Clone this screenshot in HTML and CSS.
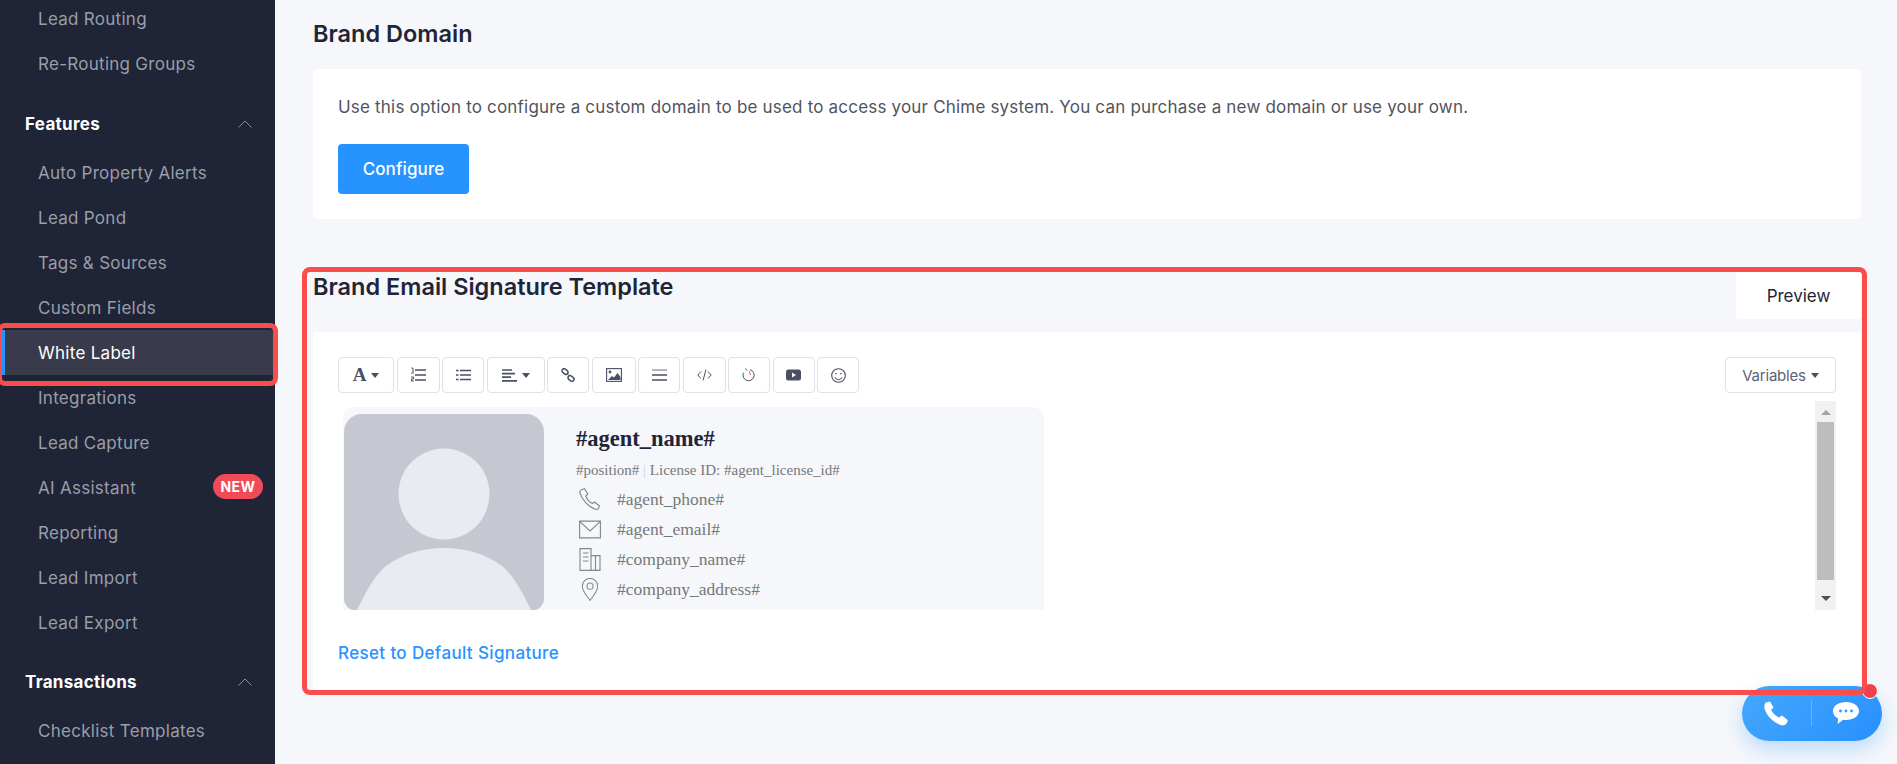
FILE: index.html
```html
<!DOCTYPE html>
<html lang="en">
<head>
<meta charset="utf-8">
<title>White Label</title>
<link rel="stylesheet" href="styles.css">
</head>
<body>
<div class="app">
  <aside class="sidebar">
    <ul class="nav nav-top">
      <li class="nav-item">Lead Routing</li>
      <li class="nav-item">Re-Routing Groups</li>
    </ul>
    <div class="nav-head"><span>Features</span><svg class="chev" viewBox="0 0 14 8"><path d="M0.5 7.5L7 1l6.5 6.5"/></svg></div>
    <ul class="nav">
      <li class="nav-item">Auto Property Alerts</li>
      <li class="nav-item">Lead Pond</li>
      <li class="nav-item">Tags &amp; Sources</li>
      <li class="nav-item">Custom Fields</li>
      <li class="nav-item active">White Label</li>
      <li class="nav-item">Integrations</li>
      <li class="nav-item">Lead Capture</li>
      <li class="nav-item">AI Assistant<span class="badge">NEW</span></li>
      <li class="nav-item">Reporting</li>
      <li class="nav-item">Lead Import</li>
      <li class="nav-item">Lead Export</li>
    </ul>
    <div class="nav-head"><span>Transactions</span><svg class="chev" viewBox="0 0 14 8"><path d="M0.5 7.5L7 1l6.5 6.5"/></svg></div>
    <ul class="nav">
      <li class="nav-item">Checklist Templates</li>
    </ul>
  </aside>

  <main class="main">
    <h2 class="title">Brand Domain</h2>
    <section class="card domain">
      <p class="lead">Use this option to configure a custom domain to be used to access your Chime system. You can purchase a new domain or use your own.</p>
      <button class="btn-primary">Configure</button>
    </section>

    <div class="sig-head">
      <h2 class="title">Brand Email Signature Template</h2>
      <div class="tab">Preview</div>
    </div>
    <section class="card editor-card">
      <div class="toolbar">
        <div class="tools">
          <button class="tool w56"><span class="glyph-a">A</span><i class="caret"></i></button>
          <button class="tool w43"><svg width="15" height="16" viewBox="0 0 15 16"><path class="ln" d="M4 3h11M4 8h11M4 13h11"/><path class="ln-thin" d="M0.500 1h1.500v4M0 6h3M0 10h2.500v2H0.500v2h2.500"/></svg></button>
          <button class="tool w42"><svg width="15" height="12" viewBox="0 0 15 12"><path class="ln" d="M4 1.500h11M4 6h11M4 10.500h11M0 1.500h2.500M0 6h2.500M0 10.500h2.500"/></svg></button>
          <button class="tool w58"><svg width="15" height="13" viewBox="0 0 15 13"><path class="ln" d="M0 1h10M0 4.600h13M0 8.200h9M0 11.800h15"/></svg><i class="caret"></i></button>
          <button class="tool w42"><svg width="14" height="14" viewBox="0 0 14 14"><rect class="chain" x="0.700" y="1.500" width="6.500" height="4.200" rx="2.100" transform="rotate(40 4 3.600)"/><rect class="chain" x="6.800" y="8.300" width="6.500" height="4.200" rx="2.100" transform="rotate(40 10 10.400)"/><path class="ln-thin" d="M6 5.500l2 2"/></svg></button>
          <button class="tool w44"><svg width="16" height="14" viewBox="0 0 16 14"><rect class="frame" x="0.600" y="0.600" width="14.800" height="12.800"/><circle cx="4" cy="4" r="1.400" fill="#4a4f63"/><path d="M2 12l4-4 2 1.500 3.500-4.500 3 4v3z" fill="#4a4f63"/></svg></button>
          <button class="tool w42"><svg width="15" height="12" viewBox="0 0 15 12"><path d="M0 1h15" stroke="#b4b6bd" stroke-width="2"/><path class="ln" d="M0 6h15M0 11h15"/></svg></button>
          <button class="tool w43"><svg width="15" height="12" viewBox="0 0 15 12"><path class="ln-thin" d="M4 2.500L0.800 6 4 9.500M11 2.500L14.200 6 11 9.500M9 0.500L6 11.500"/></svg></button>
          <button class="tool w42"><svg width="14" height="14" viewBox="0 0 14 14"><path class="ln-thin" d="M3.500 0.500l1.500 2"/><path class="ln-thin" d="M8 1.700a5.600 5.600 0 1 1-6.500 3"/><path d="M7 3l1.600 4" stroke="#e8694a" stroke-width="1" fill="none"/></svg></button>
          <button class="tool w42"><svg width="15" height="12" viewBox="0 0 15 12"><rect x="0" y="0.500" width="15" height="11" rx="2.500" fill="#4a4f63"/><path d="M6 3.500v5l4-2.500z" fill="#fff"/></svg></button>
          <button class="tool w42"><svg width="15" height="15" viewBox="0 0 15 15"><circle class="frame" cx="7.500" cy="7.500" r="6.800"/><circle cx="5" cy="5.800" r="0.800" fill="#4a4f63"/><circle cx="10" cy="5.800" r="0.800" fill="#4a4f63"/><path class="ln-thin" d="M3.800 9.200a4 4 0 0 0 7.400 0"/></svg></button>
        </div>
        <button class="variables">Variables<i class="caret"></i></button>
      </div>

      <div class="editor">
        <div class="signature">
          <svg class="avatar" viewBox="0 0 200 196"><path d="M0 18a18 18 0 0 1 18-18h164a18 18 0 0 1 18 18v166a12 12 0 0 1-8 12H8a12 12 0 0 1-8-12z" fill="#c5c8d1"/><circle cx="100" cy="80" r="45.500" fill="#e9ebf0"/><path d="M13 196C22 178 30 162 42 152 58 140 78 134 100 134S142 140 158 152C170 162 178 178 187 196z" fill="#e9ebf0"/></svg>
          <div class="sig-body">
            <div class="sig-name">#agent_name#</div>
            <div class="sig-meta">#position# <span class="sep">|</span> License ID: #agent_license_id#</div>
            <div class="sig-row"><svg class="sig-icon" viewBox="0 0 22 22"><path d="M2.500 1.200l3-1 3.300 5.300-2 2c1 3 3.400 6 6.600 7.500l2.200-1.500 4.800 4-.8 2.300c-.5 1-1.700 1.500-3 1C9 18.500 3 11 .9 4.500c-.2-1.500.5-2.800 1.600-3.300z"/></svg><span>#agent_phone#</span></div>
            <div class="sig-row"><svg class="sig-icon" viewBox="0 0 22 23"><path d="M.6 3.100h20.800v16.800H.6zM.6 3.400L11 13 21.400 3.400"/></svg><span>#agent_email#</span></div>
            <div class="sig-row"><svg class="sig-icon" viewBox="0 0 22 23"><path d="M1 22.400V.6h11v21.800M12 7.600h9v14.800M.5 22.400h21M4 5h5.500M4 9h5.500M4 13h5.500M16.500 7.600v14.800"/></svg><span>#company_name#</span></div>
            <div class="sig-row"><svg class="sig-icon" viewBox="0 0 22 24"><path d="M11 23.300C7 18 3 13.500 3 8.500a8 8 0 0 1 16 0c0 5-4 9.500-8 14.800z"/><circle cx="11" cy="8.500" r="3.200"/></svg><span>#company_address#</span></div>
          </div>
        </div>
        <div class="scrollbar">
          <i class="arrow-up"></i>
          <div class="thumb"></div>
          <i class="arrow-down"></i>
        </div>
      </div>
      <a class="reset" href="#">Reset to Default Signature</a>
    </section>
  </main>

  <div class="mark mark-nav"></div>
  <div class="mark mark-sig"></div>

  <div class="widget">
    <svg class="w-phone" viewBox="0 0 26 26"><path d="M3 1.500l4-1 3.500 6-2.500 2.500c1.500 3 4.500 6 8 7.500l3-2 5.500 4.500c.5 1.500-1 4-3 5-2 .8-5 0-8-2C8 19 3 13 1.500 7.500 1 5 1.500 2.800 3 1.500z"/></svg>
    <span class="w-div"></span>
    <svg class="w-chat" viewBox="0 0 26 23"><path d="M13 0c7.200 0 13 3.800 13 9s-5.800 9-13 9c-1 0-2 0-2.800-.2L4.500 22l.6-5.500C2 15 0 12.200 0 9 0 3.800 5.800 0 13 0z" fill="#fff"/><circle cx="7.500" cy="9" r="1.400" fill="#2f97fd"/><circle cx="13" cy="9" r="1.400" fill="#2f97fd"/><circle cx="18.500" cy="9" r="1.400" fill="#2f97fd"/></svg>
    <span class="w-dot"></span>
  </div>
</div>
</body>
</html>
```

FILE: styles.css
```css
* { box-sizing: border-box; }
html, body { margin: 0; height: 100%; overflow: hidden; }
body { font-family: Inter, "Liberation Sans", sans-serif; background: #f5f7fb; color: #1f2437; }
.app { position: relative; display: flex; width: 1897px; height: 764px; overflow: hidden; }

/* sidebar */
.sidebar { flex: 0 0 275px; height: 764px; background: #1f2437; overflow: hidden; }
.nav { list-style: none; margin: 3px 0 0; padding: 0; }
.nav-top { margin-top: -3px; }
.nav-item { display: flex; align-items: center; justify-content: space-between; height: 45px; padding: 1px 12px 1px 38px; font-size: 17px; letter-spacing: .28px; color: #9a9ea8; }
.nav-top .nav-item { padding-top: 0; padding-bottom: 2px; }
.nav-item.active { background: #393b4d; color: #fff; border-left: 5px solid #2693ff; padding-left: 33px; }
.badge { display: flex; align-items: center; justify-content: center; width: 50px; height: 25px; border-radius: 13px; background: #f04a58; color: #fff; font-size: 14px; font-weight: 700; letter-spacing: .4px; margin-top: -2px; }
.nav-head { display: flex; align-items: center; justify-content: space-between; height: 45px; margin-top: 15px; padding: 0 23px 1px 25px; font-size: 17px; letter-spacing: .3px; font-weight: 700; color: #fff; }
.nav-top + .nav-head { padding-bottom: 2px; }
.chev { width: 14px; height: 8px; }
.chev path { fill: none; stroke: #8a8e9a; stroke-width: 1; }

/* main */
.main { flex: 1; padding: 19px 36px 0 38px; min-width: 0; }
.title { margin: 0; height: 30px; line-height: 30px; font-size: 23.500px; font-weight: 600; color: #1f2437; }
.card { background: #fff; border-radius: 4px; }
.domain { height: 150px; margin-top: 20px; padding: 26px 25px 25px; }
.lead { margin: 0; height: 24px; line-height: 24px; font-size: 17px; letter-spacing: .19px; color: #50545f; }
.btn-primary { display: block; width: 131px; height: 50px; margin-top: 25px; border: 0; border-radius: 4px; background: #2693ff; color: #fff; font: 500 17px Inter, "Liberation Sans", sans-serif; letter-spacing: .1px; }

.sig-head { display: flex; justify-content: space-between; align-items: flex-start; height: 47px; margin-top: 53px; }
.tab { display: flex; align-items: center; justify-content: center; width: 125px; height: 47px; background: #fff; border-radius: 0 0 4px 4px; font-size: 17px; color: #1f2437; }
.editor-card { height: 358px; margin-top: 13px; padding: 25px 25px 0; }
.toolbar { display: flex; justify-content: space-between; }
.tools { display: flex; gap: 2.500px; }
.tool, .variables { display: flex; align-items: center; justify-content: center; height: 36px; padding: 0; background: #fff; border: 1px solid #e0e1e4; border-radius: 4px; }
.tool { gap: 5px; }
.w42 { width: 42px; }
.w43 { width: 43px; }
.w44 { width: 44px; }
.w56 { width: 56px; }
.w58 { width: 58px; }
.glyph-a { font: 700 19px/20px "Liberation Serif", serif; color: #4a4f63; }
.ln { fill: none; stroke: #4a4f63; stroke-width: 1.700; }
.ln-thin { fill: none; stroke: #4a4f63; stroke-width: 1; }
.chain { fill: none; stroke: #4a4f63; stroke-width: 1.500; }
.frame { fill: none; stroke: #4a4f63; stroke-width: 1.100; }
.caret { display: inline-block; width: 0; height: 0; border-left: 4.500px solid transparent; border-right: 4.500px solid transparent; border-top: 5px solid #4a4f63; }
.variables { width: 111px; gap: 5px; font: 400 15px Inter, "Liberation Sans", sans-serif; letter-spacing: -.2px; color: #5d6275; }

.editor { display: flex; justify-content: space-between; align-items: flex-start; height: 209px; margin-top: 8px; }
.signature { display: flex; width: 701px; height: 203px; margin: 6px 0 0 5px; padding: 7px 0 0 1px; background: #f5f7fb; border-radius: 12px 12px 0 0; overflow: hidden; font-family: "Liberation Serif", serif; }
.avatar { flex: 0 0 200px; width: 200px; height: 196px; }
.sig-body { margin-left: 32px; }
.sig-name { height: 48px; padding-top: 12px; line-height: 26px; font-size: 22.500px; font-weight: 700; color: #1f2437; }
.sig-meta { height: 22px; line-height: 17px; font-size: 15px; color: #777; }
.sep { color: #cdd6e4; }
.sig-row { display: flex; align-items: center; height: 30px; padding-left: 3px; font-size: 17.500px; color: #777; }
.sig-row span { margin-left: 16px; }
.sig-icon { flex: 0 0 22px; width: 22px; height: 23px; }
.sig-icon path, .sig-icon circle { fill: none; stroke: #84868f; stroke-width: 1.100; }
.scrollbar { flex: 0 0 21px; display: flex; flex-direction: column; align-items: center; height: 209px; background: #f1f1f1; }
.arrow-up { margin-top: 9px; width: 0; height: 0; border-left: 5px solid transparent; border-right: 5px solid transparent; border-bottom: 5px solid #a3a3a3; }
.thumb { width: 17px; height: 158px; margin-top: 7px; background: #bdbdbd; }
.arrow-down { margin-top: 16px; width: 0; height: 0; border-left: 5px solid transparent; border-right: 5px solid transparent; border-top: 5px solid #505050; }
.reset { display: block; margin-top: 31px; font-size: 17px; letter-spacing: .36px; font-weight: 500; line-height: 24px; color: #2693ff; text-decoration: none; }

/* annotation overlays */
.mark { position: absolute; border: 5px solid #fb4c4c; border-radius: 8px; pointer-events: none; }
.mark-nav { left: -3px; top: 323px; width: 281px; height: 63px; }
.mark-sig { left: 302px; top: 267px; width: 1565px; height: 428px; z-index: 2; }

/* contact widget */
.widget { position: absolute; left: 1742px; top: 686px; z-index: 1; width: 140px; height: 55px; border-radius: 28px; background: linear-gradient(135deg, #45a8fd, #2790fd); box-shadow: 0 8px 20px rgba(38, 147, 255, .28); }
.w-phone { position: absolute; left: 21px; top: 15px; width: 26px; height: 26px; fill: #fff; }
.w-div { position: absolute; left: 69px; top: 15px; width: 1px; height: 25px; background: rgba(255, 255, 255, .25); }
.w-chat { position: absolute; left: 91px; top: 16px; width: 26px; height: 23px; }
.w-dot { position: absolute; left: 120px; top: -3px; z-index: 3; width: 16px; height: 16px; border-radius: 50%; background: #f0414f; border: 1px solid #fff; }
```
